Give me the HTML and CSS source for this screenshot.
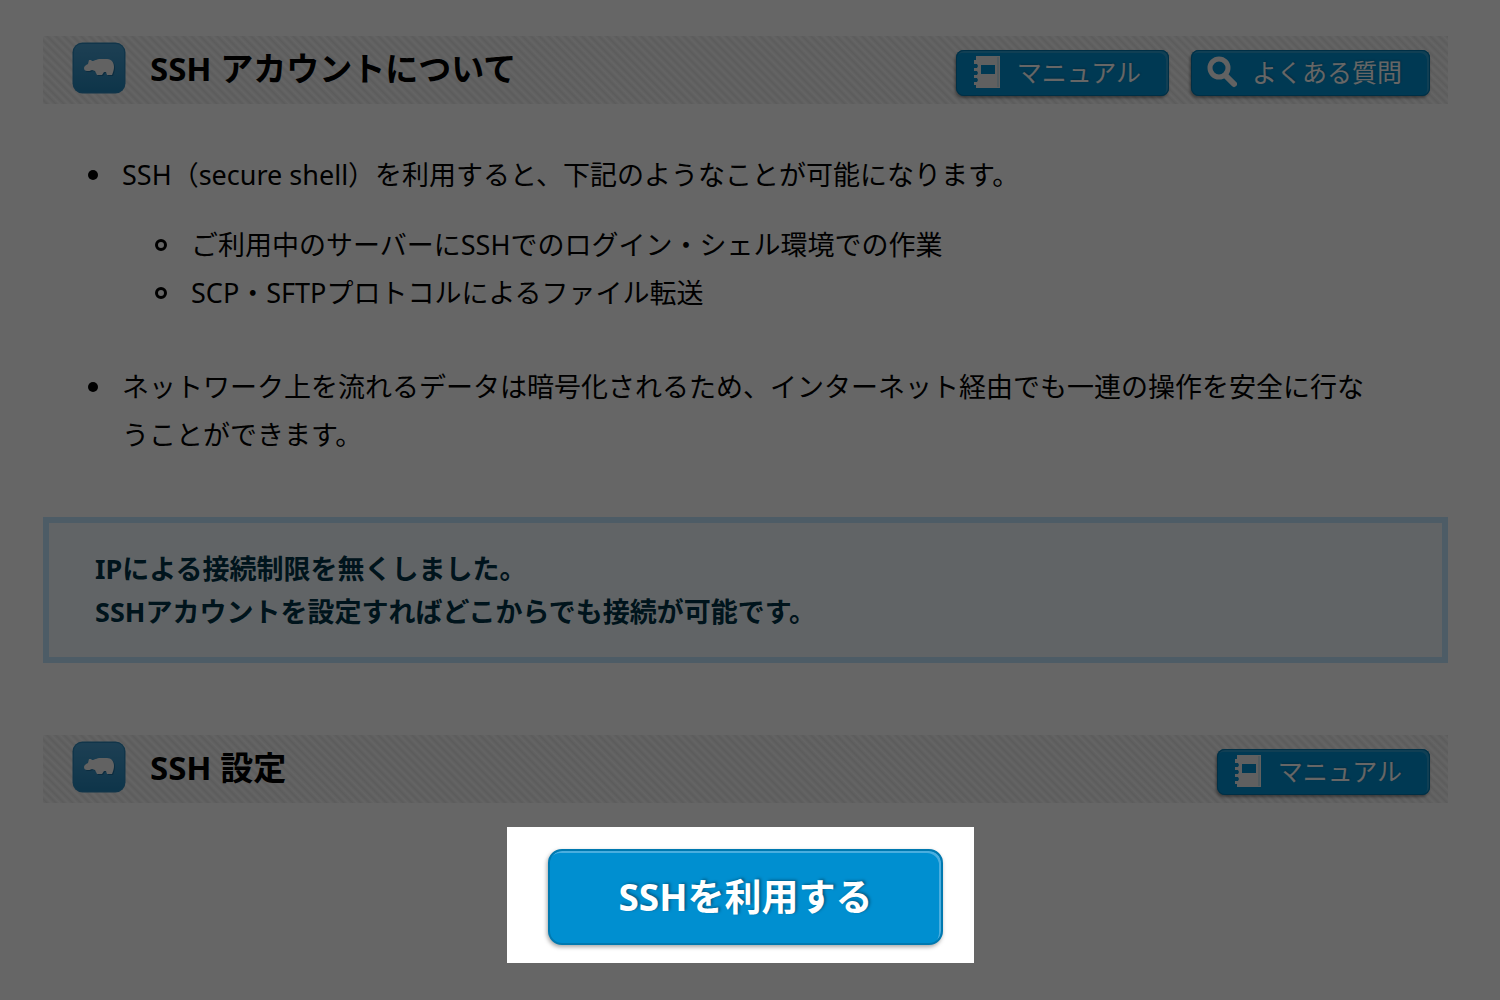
FILE: index.html
```html
<!DOCTYPE html>
<html lang="ja">
<head>
<meta charset="utf-8">
<meta name="viewport" content="width=device-width, initial-scale=1">
<title>SSH 設定</title>
<link rel="stylesheet" href="styles.css">
</head>
<body>
<svg class="defs" aria-hidden="true">
  <defs>
    <linearGradient id="tile" x1="0" y1="0" x2="0" y2="1">
      <stop offset="0" stop-color="#4a9fd0"/>
      <stop offset="1" stop-color="#2384b8"/>
    </linearGradient>
    <symbol id="hippo" viewBox="0 0 54 52">
      <rect x="0.5" y="0.5" width="53" height="51" rx="10" fill="#2b86b8"/>
      <rect x="2" y="2" width="50" height="48" rx="8" fill="url(#tile)"/>
      <path transform="translate(1 1)" fill="#1f6f9f" d="M12 26c0-2 2-3 4-4l1-4 2 0 1 1c3 0 4-2 9-2h6c5 0 7 4 7 8 0 3-1 5-2 8h-5l-1-3-2 0-2 3h-5l-2-4-3-1c-2 1-3 1-5 1-2 0-3-1-3-3z"/>
      <path fill="#f6f6f6" d="M12 26c0-2 2-3 4-4l1-4 2 0 1 1c3 0 4-2 9-2h6c5 0 7 4 7 8 0 3-1 5-2 8h-5l-1-3-2 0-2 3h-5l-2-4-3-1c-2 1-3 1-5 1-2 0-3-1-3-3z"/>
    </symbol>
    <symbol id="book" viewBox="0 0 30 34">
      <path fill="#f0f0f0" fill-rule="evenodd" d="M4 1h24v32H4v-3H2v-3h3l1-2-1-2H2v-3h3l1-2-1-2H2v-3h3l1-2-1-2H2V5h2zM9 10v9h14v-9z"/>
      <path fill="none" stroke="#9fd0e8" d="M26 2v30"/>
    </symbol>
    <symbol id="search" viewBox="0 0 30 34">
      <circle cx="12" cy="13" r="9" fill="none" stroke="#f4f4f4" stroke-width="5"/>
      <path fill="none" stroke="#f4f4f4" stroke-width="6" stroke-linecap="round" d="M19 21l8 8"/>
    </symbol>
  </defs>
</svg>
<main class="page">
  <section>
    <header class="bar">
      <svg class="bar-icon" aria-hidden="true"><use href="#hippo"/></svg>
      <h2 class="bar-title">SSH アカウントについて</h2>
      <nav class="bar-links">
        <a class="help" href="#manual"><svg class="help-icon" aria-hidden="true"><use href="#book"/></svg>マニュアル</a>
        <a class="help" href="#faq"><svg class="help-icon" aria-hidden="true"><use href="#search"/></svg>よくある質問</a>
      </nav>
    </header>
    <ul class="list about">
      <li class="item">
        <div>
          <p class="text">SSH（secure shell）を利用すると、下記のようなことが可能になります。</p>
          <ul class="list sublist">
            <li class="item subitem">ご利用中のサーバーにSSHでのログイン・シェル環境での作業</li>
            <li class="item subitem">SCP・SFTPプロトコルによるファイル転送</li>
          </ul>
        </div>
      </li>
      <li class="item">
        <p class="text">ネットワーク上を流れるデータは暗号化されるため、インターネット経由でも一連の操作を安全に行なうことができます。</p>
      </li>
    </ul>
    <p class="notice">IPによる接続制限を無くしました。<br>SSHアカウントを設定すればどこからでも接続が可能です。</p>
  </section>
  <section>
    <header class="bar">
      <svg class="bar-icon" aria-hidden="true"><use href="#hippo"/></svg>
      <h2 class="bar-title">SSH 設定</h2>
      <nav class="bar-links">
        <a class="help" href="#manual"><svg class="help-icon" aria-hidden="true"><use href="#book"/></svg>マニュアル</a>
      </nav>
    </header>
    <div class="action">
      <div class="spotlight">
        <button class="primary" type="button">SSHを利用する</button>
      </div>
    </div>
  </section>
</main>
</body>
</html>
```

FILE: styles.css
```css
*,
*::before {
  box-sizing: border-box;
}

body {
  margin: 0;
  background: #fff;
  color: #000;
  font-family: "Noto Sans", "Noto Sans CJK JP", sans-serif;
  font-size: 27px;
  line-height: 48px;
  overflow-x: hidden;
}

.defs {
  display: block;
  width: 0;
  height: 0;
}

.page {
  min-height: 100vh;
  padding: 36px 52px 36px 43px;
}

.bar {
  display: flex;
  gap: 24px;
  padding: 6px 18px 8px 29px;
  background: repeating-linear-gradient(45deg, #fcfcfc 0, #e6e6e6 3px, #fcfcfc 6px);
}

.bar-icon {
  flex: none;
  width: 54px;
  height: 52px;
}

.bar-title {
  flex: 1;
  margin: 0;
  font-size: 33px;
  line-height: 54px;
}

.bar-links {
  display: flex;
  align-self: flex-end;
  gap: 22px;
}

.help {
  display: flex;
  align-items: center;
  gap: 15px;
  height: 46px;
  padding: 0 28px 3px 16px;
  border-radius: 8px;
  background: #008fd0;
  box-shadow: inset 0 0 0 1px #0076ac, inset -2px 2px 0 1px #2a9dd2, -1px 2px 3px rgba(0, 0, 0, 0.4);
  color: #fff;
  font-size: 25px;
  line-height: 42px;
  text-decoration: none;
  text-shadow: 1px -1px 2px #0074a8;
}

.help-icon {
  width: 30px;
  height: 34px;
}

.list {
  margin: 0;
  padding: 0;
  list-style: none;
}

.about {
  padding: 47px 60px 58px 45px;
}

.item {
  display: flex;
  gap: 24px;
}

.item::before {
  content: "";
  flex: none;
  width: 10px;
  height: 10px;
  margin-top: 19px;
  border-radius: 50%;
  background: #000;
}

.subitem::before {
  width: 12px;
  height: 12px;
  margin-top: 18px;
  border: 3px solid #000;
  background: none;
}

.text {
  margin: 0;
}

.sublist {
  padding: 22px 0 46px 33px;
}

.notice {
  margin: 0 0 72px;
  padding: 24px 46px;
  border: 6px solid #c0e6ff;
  background: #f2fbff;
  color: #003348;
  font-weight: bold;
  line-height: 43px;
}

.action {
  display: flex;
  justify-content: center;
  padding: 24px 10px 0 0;
}

/* Everything around the highlighted button is dimmed. */
.spotlight {
  position: relative;
  z-index: 1;
  padding: 22px 31px 18px 41px;
  box-shadow: 0 0 0 200vmax rgba(0, 0, 0, 0.6);
}

.primary {
  display: block;
  height: 96px;
  padding: 0 68px;
  border: 2px solid #0079b0;
  border-radius: 14px;
  background: #008fd0;
  box-shadow: inset -2px 2px 0 #4aaedf, -1px 2px 4px rgba(0, 0, 0, 0.35);
  color: #fff;
  font: bold 37px/48px "Noto Sans", "Noto Sans CJK JP", sans-serif;
  text-shadow: 2px -1px 3px #005c86;
}
```
